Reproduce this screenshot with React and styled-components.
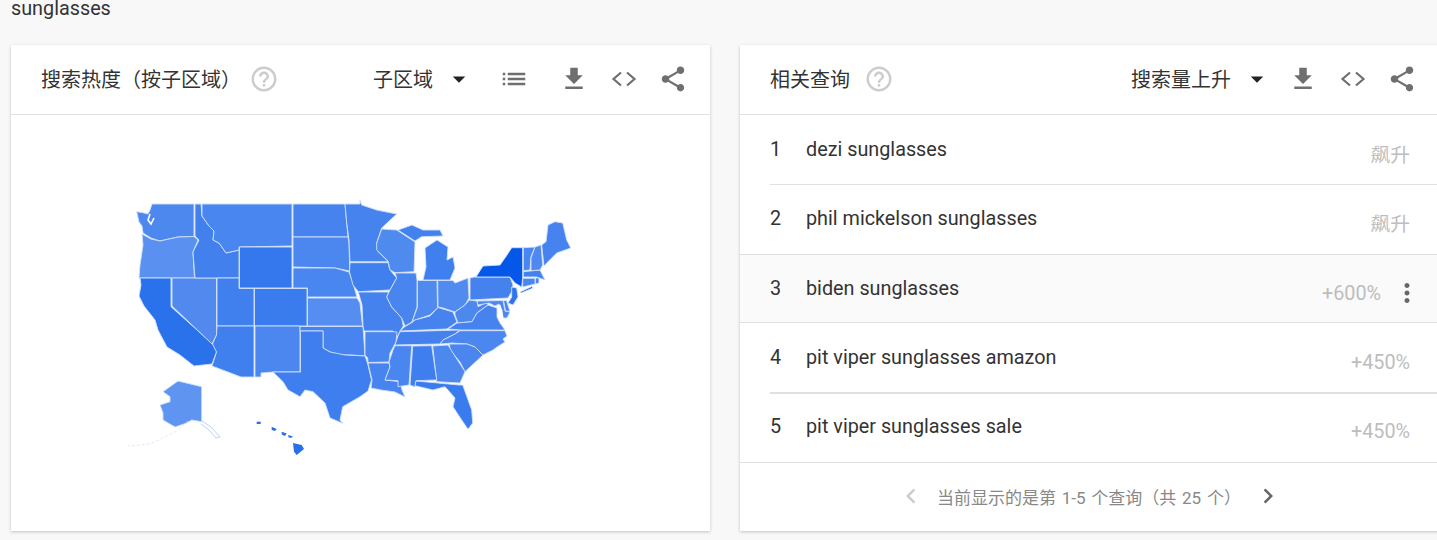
import React from "react";
import styled, { createGlobalStyle } from "styled-components";
import {
  MdHelpOutline, MdArrowDropDown, MdList, MdFileDownload, MdShare,
  MdMoreVert, MdChevronLeft, MdChevronRight,
} from "react-icons/md";

const Global = createGlobalStyle`
  html, body { margin: 0; padding: 0; background: #f8f8f8; }
  body { font-family: Roboto, "Noto Sans CJK SC", sans-serif; overflow: hidden; }
`;

const Page = styled.div`
  width: 1437px;
  height: 540px;
  overflow: hidden;
  background: #f8f8f8;
`;
const Term = styled.div`
  height: 45px;
  box-sizing: border-box;
  padding: 1px 0 0 11px;
  font-size: 19.8px;
  line-height: 16px;
  color: #333;
`;
const Cards = styled.div`
  display: grid;
  grid-template-columns: 699px 699px;
  gap: 30px;
  padding-left: 11px;
`;
const Card = styled.section`
  height: 486px;
  background: #fff;
  box-shadow: 0 1px 3px rgba(0, 0, 0, 0.22);
  display: flex;
  flex-direction: column;
`;
const Head = styled.header`
  height: 70px;
  box-sizing: border-box;
  flex: none;
  border-bottom: 1px solid #e0e0e0;
  display: flex;
  align-items: center;
  padding: 0 22px 2px 30px;
  color: #6f6f6f;
`;
const Title = styled.h2`
  margin: 0;
  font-size: 20px;
  font-weight: 400;
  color: #333;
`;
const Help = styled(MdHelpOutline)`
  margin-left: ${(p) => p.$gap}px;
  font-size: 30px;
  color: #ccc;
`;
const Spacer = styled.div`
  flex: 1;
`;
const Select = styled.div`
  font-size: 20px;
  color: #333;
  display: flex;
  align-items: center;
`;
const Caret = styled(MdArrowDropDown)`
  font-size: 30px;
  color: #222;
  margin: 0 ${(p) => p.$after}px 0 11px;
`;
const Tool = styled.span`
  display: inline-flex;
  width: 30px;
  justify-content: center;
  align-items: center;
  font-size: 30px;
  margin-left: ${(p) => p.$gap || 0}px;
`;
const MapArea = styled.div`
  flex: 1;
  display: flex;
  align-items: center;
  justify-content: center;
`;
const Rows = styled.ol`
  list-style: none;
  margin: 0;
  padding: 0;
`;
const Row = styled.li`
  height: ${(p) => p.$h}px;
  box-sizing: border-box;
  padding: 0 ${(p) => (p.$hover ? 17 : 29)}px ${(p) => (p.$up ? 2 : 0)}px 30px;
  display: flex;
  align-items: center;
  background: ${(p) => (p.$hover ? "#fafafa" : "transparent")};
  position: relative;
  font-size: 19.8px;
  color: #333;
  &::after {
    content: "";
    position: absolute;
    right: 0;
    bottom: 0;
    left: ${(p) => (p.$inset ? 30 : 0)}px;
    border-bottom: ${(p) => p.$line || 1}px solid #e0e0e0;
  }
`;
const Rank = styled.span`
  width: 36px;
  margin-top: -2px;
`;
const Query = styled.span`
  flex: 1;
  margin-top: -2px;
`;
const Value = styled.span`
  color: #bdbdbd;
  margin-top: ${(p) => (p.$cjk ? 6 : 8)}px;
`;
const More = styled(MdMoreVert)`
  font-size: 30px;
  color: #666;
  margin: 8px 0 0 11px;
`;
const Foot = styled.footer`
  flex: 1;
  display: flex;
  align-items: center;
  justify-content: center;
  font-size: 17px;
  word-spacing: 1.5px;
  color: #888;
  padding-bottom: 2px;
`;
const Pager = styled.span`
  display: inline-flex;
  font-size: 30px;
  color: ${(p) => p.$c};
  margin: ${(p) => p.$m};
`;

const states = [
  ["WA", "#4d88ef", "136.7,211.7 142,212.5 148,214 150,210 152,204 194,204 194,236.5 178,237 160,241 151,238 143,233 142,226 139,222"],
  ["OR", "#5a91f0", "142,234 151,239 160,241 178,237 194,236.5 198,240 193,252 194.5,278 139,278 140,265 143,245"],
  ["CA", "#2a72ec", "140,278 171,278 171,306.7 212.7,344 216.7,351.7 212,364 194,366 180,355 167,347 158,330 155,320 144,306 139,296 141,285"],
  ["NV", "#5189ef", "172,278 216.5,278 216.5,335 212,344 172,306"],
  ["ID", "#4280ee", "195,204 201,204 202,216 209,226 214,231 213,240 219,243 226,253 239,250 239,278 195,278 193,252 199,240 195,236"],
  ["MT", "#4a86ef", "202,204 292,204 292,246 239,247 239,250 226,253 219,243 213,240 214,231 209,226 202,216"],
  ["WY", "#3578ee", "239.5,247 292,247 292,288 239.5,288"],
  ["UT", "#3f7fee", "217,278 239,278 239,288.5 254,288.5 254,326 217,326"],
  ["CO", "#3a7bee", "254.5,288.5 307,288.5 307,326 254.5,326"],
  ["AZ", "#3f7fee", "217,326 254,326 254,377 241,377 212,366 216.5,352 212.5,344 216.5,335"],
  ["NM", "#4b87ef", "255,326 300,326 300,372 273,372 261,373 261,377 255,377"],
  ["ND", "#4783ee", "293,204 345,204 346,215 348,237 293,237"],
  ["SD", "#4c87ef", "293,237 348,237 349,243 349.5,262 349.5,271 340,269 335,268 293,267"],
  ["NE", "#4a86ef", "293,268 335,268 349,272 352,280 357,297 307.5,297 307.5,288 293,288"],
  ["KS", "#558ef0", "307.5,298 357,298 360,303 362.5,326 307.5,326"],
  ["OK", "#4884ef", "300,326.5 363,326.5 365,356 352,355 340,355 330,352 323,348 323,331 300,331"],
  ["TX", "#3f7eee", "300.5,331 323,331 323,348 330,352 345,355 365,356 367.5,363 371.5,380 368,391 360,396.7 342.7,406.7 340,420 342.7,423.3 330,418 325,403 313,391.7 305,390 300,396.7 288,390 283,381.7 273,372 300.5,372"],
  ["MN", "#4683ee", "345,204 360,204 360,200 361.7,205 376.7,210 396.7,214 381.7,228 376.7,243 378.3,251.7 388.3,261.7 350,261.7 349,240 346.7,223"],
  ["IA", "#3f7fee", "350,262.7 388,262.7 390,270 396.7,278 390,290 358.3,291.7 353,285 349.5,272"],
  ["MO", "#4682ee", "358.3,292 389,292 386.7,297 391.7,307 401.7,318 403.3,326 400,331 398,336 393,336 393,331 364,331 363,326 362,305"],
  ["AR", "#4a86ef", "365,331.7 393,331.7 397,332 396,342 390,353 389,362 368,362.5 367.7,358 365,355"],
  ["LA", "#4884ef", "368,363 389,363 390,367 385,380 400,381.7 402,390 405,397 395,392 381,390 371,388 372,380"],
  ["WI", "#4f8aef", "381.7,229 396.7,230 415,242 414,271.7 395,272.7 390,270 388,261 376.7,250 376.7,243"],
  ["MIU", "#4281ee", "398,230 412,225 423,230 440,230 443,236 421.7,236.7 415,241"],
  ["MI", "#3f7fee", "425,248 437,240 448,247 447,260 453,257 455,268 450,280 423,280 426,267"],
  ["IL", "#4985ef", "395,273 416,273 417,280 417,307 412,322 405,326 401.7,318 391.7,307 386.7,297 390,290 396.7,278"],
  ["IN", "#508aef", "417.5,280.5 437,280.5 437.5,308 430,315 415,320 412,322 417.5,307"],
  ["OH", "#518bef", "437.7,280.5 453,280.5 455,283 468,278 469,298 465,305 455,312 443,308 438,307"],
  ["KY", "#4683ee", "438,307.5 453,312 457,322 447,329 400,331 405,326.5 412,322.5 415,320 430,316"],
  ["TN", "#4581ee", "400,331.7 460,330 455,334 443,340 440,344 395,345 398,336"],
  ["WV", "#4d88ef", "469.3,300 477,301 478,306.7 487,302 488,305 477,313 472,321.7 458,323 455,315 455,312 465,305"],
  ["VA", "#4783ee", "488,305 497,308 497,317 500,323 505,330 461,330 448,329 457,323 472,321.7 477,313"],
  ["MD", "#4e88ef", "477,301 503,300.5 505,311 510,312 507,318 503,318 502,310 499,304 495,306 489,303 478,305"],
  ["DE", "#4a86ef", "503.5,300.5 506.5,300.5 510,311.5 505.5,311"],
  ["NC", "#4c87ef", "460,330.7 505,330.7 507,336 503,339 505,342 497,347 493,350 483,355 475,347 467,344 452,343 440,344 443,340 455,334"],
  ["SC", "#4b86ef", "449.5,344 467,344 475,347 483,355 465,371.7 460,362 450,350"],
  ["GA", "#4d88ef", "432.7,346 448,345 453,353 465,371.7 460,383 436.7,381.7 435,367"],
  ["AL", "#3e7eee", "412.7,346 431.7,345.7 436.7,380 416,380.7 415,387 410,385"],
  ["MS", "#4a86ef", "395,345.7 411.7,345.7 409,385 398,386.7 398,380.7 385,380 390,367 389,362 393,350"],
  ["FL", "#3a7bee", "416,381 435,382.7 459,385 462.7,385 471.7,410 472.7,423 468,429.3 461.7,420 453,406.7 455,398 445,386.7 433,390 415,385.7"],
  ["PA", "#4582ee", "470,278 474,277 510,277 513,285 511.7,291.7 508,298 470,300"],
  ["NY", "#0457e8", "476,277 483,266 500,265 507,255 511.7,247.7 522.7,247.7 522.7,277 521.7,287 515,283 510,277"],
  ["LI", "#0457e8", "520,292 532,286.5 533,288 521,293"],
  ["NJ", "#2f74ec", "511.7,287 516.7,288 518,297 513,305 508,303 511.7,297"],
  ["CT", "#4a86ef", "522.7,278.3 535,278.3 535,284 522.7,287"],
  ["RI", "#4a86ef", "535.5,278 539,278 539,283 535.5,284"],
  ["MA", "#4582ee", "523.3,271.7 540,270 545,280 536.7,277 523.3,277"],
  ["VT", "#4a86ef", "523.3,247.7 535,247 531,256.7 530,270 523.3,270.7"],
  ["NH", "#4f89ef", "535,247 541,245 542.7,265 540,270 531,270.7 531,258"],
  ["ME", "#4683ee", "541.7,245 546,241.7 548,225 555,221.7 562.7,223 566.7,240 570.7,248 556.7,253 548,261.7 544,266"],
  ["AK", "#5f95f1", "178,381 201.7,386.7 201.7,421.7 191.7,420 186.7,423 175,427 163,420 163,413 160,405 170,401.7 170,396.7 163,391.7 170,386.7"],
];
const islands = [
  [293, 443, 301.7, 445, 304, 449, 296.7, 455, 294, 451.7],
  [256.7, 421.7, 260.7, 421.7, 260.7, 424, 256.7, 424],
  [271.7, 426.7, 276.7, 429, 275, 431, 271.7, 430],
  [281.7, 431.7, 286.7, 433.5, 285, 436, 281.7, 434.5],
  [288.3, 435, 293, 436.5, 291, 438, 288.3, 437.3],
];

const USMap = () => (
  <svg width="481" height="276" viewBox="120 185 481 276" aria-label="map">
    {states.map(([id, fill, pts]) => (
      <polygon key={id} points={pts} fill={fill} stroke="#cfe0fb" strokeWidth="0.9" strokeLinejoin="round" />
    ))}
    <path d="M150 214 L148 220 L151 224 L154 218" fill="none" stroke="#fff" strokeWidth="1.6" />
    <path d="M500 305 L503 318" fill="none" stroke="#fff" strokeWidth="1" />
    <path d="M202 421 L211 427 L220 437 L216 438 L209 430 L201 424" fill="none" stroke="#a9c6f8" strokeWidth="0.8" />
    <path d="M188 421 L175 432 L150 444 L128 446" fill="none" stroke="#cfe0fb" strokeWidth="0.7" strokeDasharray="3 2" />
    {islands.map((p, i) => (
      <polygon key={i} points={p.join(" ")} fill="#2a70ea" />
    ))}
  </svg>
);

const CodeIcon = () => (
  <svg width="26" height="16" viewBox="0 0 26 16" fill="none" stroke="currentColor" strokeWidth="2.2">
    <path d="M10 1.5 L2.5 8 L10 14.5" />
    <path d="M16 1.5 L23.5 8 L16 14.5" />
  </svg>
);

const Tools = ({ list }) => (
  <>
    {list && <Tool><MdList /></Tool>}
    <Tool $gap={list ? 30 : 0}><MdFileDownload /></Tool>
    <Tool $gap={20}><CodeIcon /></Tool>
    <Tool $gap={19}><MdShare /></Tool>
  </>
);

const rows = [
  { n: 1, q: "dezi sunglasses", v: "飙升", cjk: true, h: 70, inset: true },
  { n: 2, q: "phil mickelson sunglasses", v: "飙升", cjk: true, h: 70, up: true },
  { n: 3, q: "biden sunglasses", v: "+600%", h: 68, hover: true },
  { n: 4, q: "pit viper sunglasses amazon", v: "+450%", h: 71, inset: true, line: 2 },
  { n: 5, q: "pit viper sunglasses sale", v: "+450%", h: 69, up: true },
];

export default function App() {
  return (
    <Page>
      <Global />
      <Term>sunglasses</Term>
      <Cards>
        <Card>
          <Head>
            <Title>搜索热度（按子区域）</Title>
            <Help $gap={8} />
            <Spacer />
            <Select>子区域<Caret $after={25} /></Select>
            <Tools list />
          </Head>
          <MapArea><USMap /></MapArea>
        </Card>
        <Card>
          <Head>
            <Title>相关查询</Title>
            <Help $gap={14} />
            <Spacer />
            <Select>搜索量上升<Caret $after={16} /></Select>
            <Tools />
          </Head>
          <Rows>
            {rows.map((r) => (
              <Row key={r.n} $h={r.h} $hover={r.hover} $inset={r.inset} $up={r.up} $line={r.line}>
                <Rank>{r.n}</Rank>
                <Query>{r.q}</Query>
                <Value $cjk={r.cjk}>{r.v}</Value>
                {r.hover && <More />}
              </Row>
            ))}
          </Rows>
          <Foot>
            <Pager $c="#ccc" $m="0 11px 0 0"><MdChevronLeft /></Pager>
            当前显示的是第 1-5 个查询（共 25 个）
            <Pager $c="#666" $m="0 0 0 12px"><MdChevronRight /></Pager>
          </Foot>
        </Card>
      </Cards>
    </Page>
  );
}
